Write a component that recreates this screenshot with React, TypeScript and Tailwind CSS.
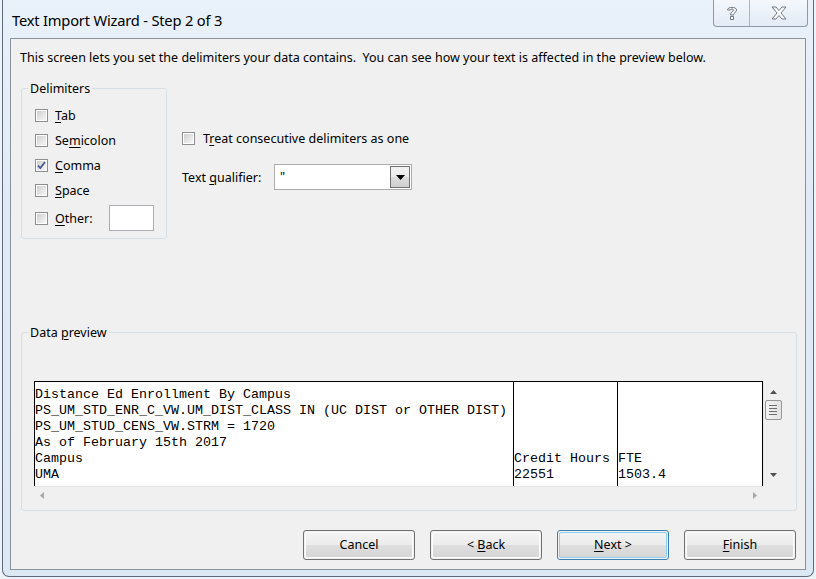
import React from "react";

const UI: React.CSSProperties = { fontFamily: '"Noto Sans", "Liberation Sans", sans-serif' };
const MONO: React.CSSProperties = { fontFamily: '"Liberation Mono", "Courier New", monospace' };

function U({ children }: { children: React.ReactNode }) {
  return <span className="underline decoration-1 underline-offset-[2px]">{children}</span>;
}

function Check({ checked = false }: { checked?: boolean }) {
  return (
    <div className="w-[13px] h-[13px] shrink-0 border border-[#8e8f8f] bg-white p-[1px]">
      <div className="w-full h-full bg-gradient-to-br from-[#cfcfcf] to-[#f7f7f7] relative">
        {checked && (
          <svg className="absolute left-[-1px] top-[-1px]" width="11" height="11" viewBox="0 0 11 11">
            <path d="M2 5.5 L4.3 8 L9 2" fill="none" stroke="#4a5c96" strokeWidth="1.8" />
          </svg>
        )}
      </div>
    </div>
  );
}

function Group({ label, className, children }: { label: React.ReactNode; className: string; children: React.ReactNode }) {
  return (
    <div className={"relative border border-[#d5dfe5] rounded-[3px] " + className}>
      <div className="absolute left-[6px] top-[-8px] px-[2px] bg-[#f0f0f0] text-[12.5px] leading-[16px] text-black">{label}</div>
      {children}
    </div>
  );
}

function Btn({ children, focused = false }: { children: React.ReactNode; focused?: boolean }) {
  return (
    <div
      className={
        "w-[112px] h-[30px] rounded-[3px] border p-[1px] " +
        (focused ? "border-[#3c7fb1]" : "border-[#707070]")
      }
    >
      <div
        className={
          "w-full h-full rounded-[2px] flex items-center justify-center pt-[1px] text-[12.5px] text-black bg-[linear-gradient(#f3f3f3_0%,#ececec_50%,#dfdfdf_51%,#d6d6d6_100%)] border " +
          (focused ? "border-[#8fd0f5]" : "border-[#fcfcfc]")
        }
      >
        <span className="whitespace-pre">{children}</span>
      </div>
    </div>
  );
}

function Tri({ dir }: { dir: "up" | "down" | "left" | "right" }) {
  const d = {
    up: "M0 4 L3.5 0 L7 4 Z",
    down: "M0 0 L7 0 L3.5 4 Z",
    left: "M4 0 L4 7 L0 3.5 Z",
    right: "M0 0 L4 3.5 L0 7 Z",
  }[dir];
  const w = dir === "up" || dir === "down" ? 7 : 4;
  const h = dir === "up" || dir === "down" ? 4 : 7;
  return (
    <svg width={w} height={h} viewBox={`0 0 ${w} ${h}`}>
      <path d={d} fill={dir === "left" || dir === "right" ? "#a8a8a8" : "#505050"} />
    </svg>
  );
}

const col1 = [
  "Distance Ed Enrollment By Campus",
  "PS_UM_STD_ENR_C_VW.UM_DIST_CLASS IN (UC DIST or OTHER DIST)",
  "PS_UM_STUD_CENS_VW.STRM = 1720",
  "As of February 15th 2017",
  "Campus",
  "UMA",
];
const col2 = ["", "", "", "", "Credit Hours", "22551"];
const col3 = ["", "", "", "", "FTE", "1503.4"];

function Col({ rows, className }: { rows: string[]; className: string }) {
  return (
    <div className={"pt-[5px] overflow-hidden " + className} style={MONO}>
      {rows.map((r, i) => (
        <div key={i} className="h-[16px] leading-[16px] text-[13.33px] whitespace-pre text-black">
          {r || " "}
        </div>
      ))}
    </div>
  );
}

export default function App() {
  return (
    <div className="w-[816px] h-[579px] overflow-hidden bg-[#eef3f9]" style={UI}>
      <div className="ml-[2px] w-[812px] h-[577px] border-x border-b border-[#5d6b7c] rounded-b-[7px] bg-[linear-gradient(180deg,#e9f1fa_0%,#dfeaf6_40%,#dde8f5_100%)] flex flex-col">
        {/* title bar */}
        <div className="h-[38px] flex items-start justify-between shrink-0">
          <div className="pl-[9px] pt-[10px] text-[14.7px] leading-[20px] text-black tracking-[-0.2px]">
            Text Import Wizard - Step 2 of 3
          </div>
          <div className="mr-[5px] flex h-[27px] border-x border-b border-[#8d9aab] rounded-b-[4px] bg-[linear-gradient(#f4f8fc,#e3ebf5)]">
            <div className="w-[36px] flex items-center justify-center border-r border-[#a9b5c4]">
              <svg width="12" height="16" viewBox="0 0 12 16">
                <path
                  d="M1.5 5 C1.5 1.5 10.5 1.5 10.5 5 C10.5 7.5 7.5 7.5 7.5 10 L4.5 10 C4.5 6.5 7.5 6.5 7.5 5 C7.5 3.5 4.5 3.5 4.5 5 Z M4.5 11.5 L7.5 11.5 L7.5 14.5 L4.5 14.5 Z"
                  fill="#ffffff"
                  stroke="#6f7884"
                  strokeWidth="1"
                />
              </svg>
            </div>
            <div className="w-[57px] flex items-center justify-center">
              <svg width="16" height="14" viewBox="0 0 16 14">
                <path
                  d="M1 1 L5 1 L8 4.5 L11 1 L15 1 L10 7 L15 13 L11 13 L8 9.5 L5 13 L1 13 L6 7 Z"
                  fill="#ffffff"
                  stroke="#6f7884"
                  strokeWidth="1"
                  strokeLinejoin="round"
                />
              </svg>
            </div>
          </div>
        </div>

        {/* client area */}
        <div className="mx-[7px] h-[532px] border border-[#8a929c] bg-[#f0f0f0] pl-[10px] pr-[9px] flex flex-col">
          <div className="mt-[11px] -ml-[1px] text-[12.5px] leading-[16px] text-black">
            This screen lets you set the delimiters your data contains.&nbsp; You can see how your text is affected in the preview below.
          </div>

          <div className="mt-[22px] flex">
            <Group label="Delimiters" className="w-[146px] h-[151px] pt-[14px] pl-[13px] pr-[12px]">
              {[
                { l: <><U>T</U>ab</>, c: false },
                { l: <>Se<U>m</U>icolon</>, c: false },
                { l: <><U>C</U>omma</>, c: true },
                { l: <><U>S</U>pace</>, c: false },
              ].map((r, i) => (
                <div key={i} className="h-[25px] flex items-center gap-[7px] text-[12.5px] text-black">
                  <Check checked={r.c} />
                  <span className="pt-[2px]">{r.l}</span>
                </div>
              ))}
              <div className="mt-[2px] h-[26px] flex items-center gap-[7px] text-[12.5px] text-black">
                <Check />
                <span className="pt-[2px]">
                  <U>O</U>ther:
                </span>
                <div className="ml-auto w-[45px] h-[26px] bg-white border border-[#abadb3]" />
              </div>
            </Group>

            <div className="ml-[15px] pt-[40px] flex flex-col">
              <div className="h-[20px] flex items-center gap-[8px] text-[12.5px] text-black">
                <Check />
                <span className="pt-[2px]">
                  T<U>r</U>eat consecutive delimiters as one
                </span>
              </div>
              <div className="mt-[16px] flex items-center">
                <div className="w-[92px] pt-[2px] text-[12.5px] text-black">
                  Text <U>q</U>ualifier:
                </div>
                <div className="w-[138px] h-[26px] bg-white border border-[#acacac] flex items-center pl-[5px] pr-[1px]">
                  <span className="flex-1 text-[12.5px] text-black leading-none">"</span>
                  <div className="w-[20px] h-[22px] border border-[#707070] bg-[linear-gradient(#f2f2f2_0%,#ebebeb_50%,#dddddd_51%,#cfcfcf_100%)] flex items-center justify-center">
                    <svg width="9" height="5" viewBox="0 0 9 5">
                      <path d="M0 0 L9 0 L4.5 5 Z" fill="#000" />
                    </svg>
                  </div>
                </div>
              </div>
            </div>
          </div>

          <Group label={<>Data <U>p</U>review</>} className="mt-[93px] w-[776px] h-[179px] pt-[48px] pl-[12px]">
            <div className="grid grid-cols-[729px_19px] grid-rows-[105px_17px]">
              <div className="bg-white border-l border-t border-r border-black flex overflow-hidden">
                <Col rows={col1} className="w-[479px] border-r border-black" />
                <Col rows={col2} className="w-[104px] border-r border-black" />
                <Col rows={col3} className="flex-1" />
              </div>
              <div className="bg-[#f0f0f0] border-l border-[#e6e6e6] flex flex-col items-center pt-[9px] pb-[9px]">
                <Tri dir="up" />
                <div className="mt-[6px] w-[17px] h-[20px] rounded-[2px] border border-[#979797] bg-[linear-gradient(90deg,#f3f3f3,#e2e2e2)] flex flex-col items-center justify-center gap-[2px]">
                  <div className="w-[8px] h-[1px] bg-[#6d6d6d]" />
                  <div className="w-[8px] h-[1px] bg-[#6d6d6d]" />
                  <div className="w-[8px] h-[1px] bg-[#6d6d6d]" />
                  <div className="w-[8px] h-[1px] bg-[#6d6d6d]" />
                </div>
                <div className="flex-1" />
                <Tri dir="down" />
              </div>
              <div className="bg-[#f0f0f0] border-t border-[#e6e6e6] flex items-center justify-between px-[6px]">
                <Tri dir="left" />
                <Tri dir="right" />
              </div>
              <div className="bg-[#f0f0f0]" />
            </div>
          </Group>

          <div className="mt-[19px] flex justify-end gap-[15px]">
            <Btn>Cancel</Btn>
            <Btn>
              {"< "}
              <U>B</U>ack
            </Btn>
            <Btn focused>
              <U>N</U>ext{" >"}
            </Btn>
            <Btn>
              <U>F</U>inish
            </Btn>
          </div>
        </div>
      </div>
    </div>
  );
}
